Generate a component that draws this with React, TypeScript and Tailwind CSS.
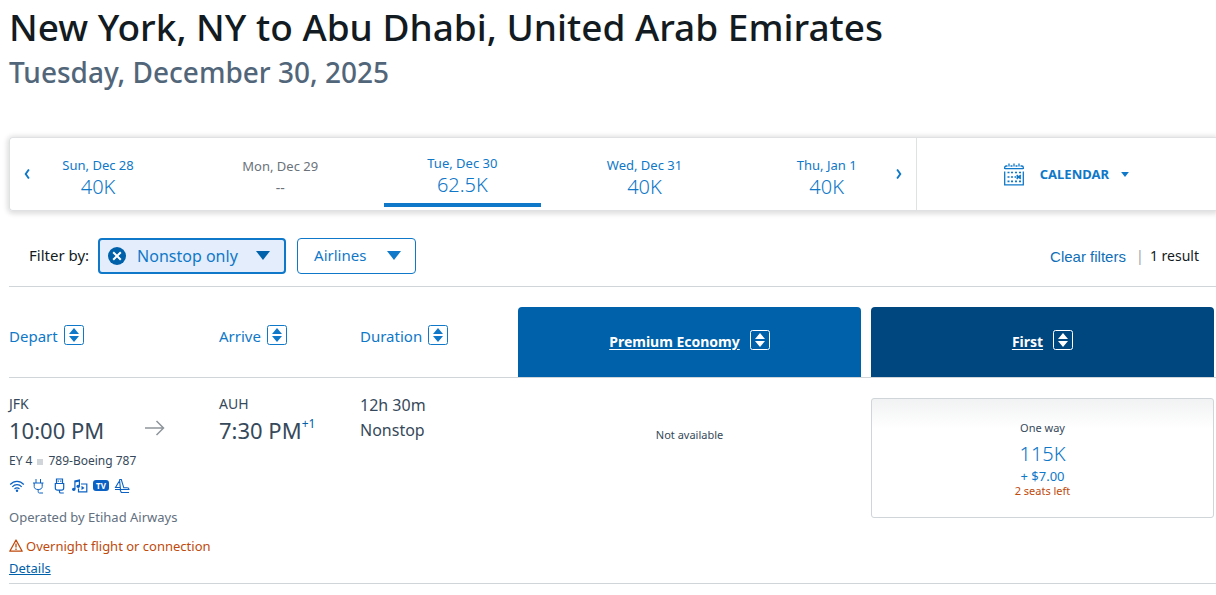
import React, { ReactNode } from "react";

function Caret({ className }: { className: string }) {
  return (
    <svg viewBox="0 0 14 9" className={className} fill="currentColor" aria-hidden="true">
      <path d="M0 0h14L7 9z" />
    </svg>
  );
}

function SortIcon() {
  return (
    <svg viewBox="0 0 20 20" className="size-5 shrink-0" aria-hidden="true">
      <rect x=".5" y=".5" width="19" height="19" rx="2" fill="none" stroke="currentColor" />
      <path d="M10 3l5 6H5zM10 17l5-6H5z" fill="currentColor" />
    </svg>
  );
}

function Chevron({ left }: { left?: boolean }) {
  return (
    <svg viewBox="0 0 6 10" className="h-2.5 w-1.5" fill="none" stroke="currentColor" strokeWidth="1.9" aria-hidden="true">
      <path d={left ? "M4.9 .5L1.700 5l3.200 4.500" : "M1.100 .5L4.300 5 1.100 9.500"} />
    </svg>
  );
}

function CalendarIcon() {
  return (
    <svg viewBox="0 0 20 23" className="h-[23px] w-5" fill="none" stroke="currentColor" aria-hidden="true">
      <path d="M.7 6V4.5Q.7 3 2.2 3H3.5M6.5 3H8.5M11.5 3H13.5M16.5 3H17.8Q19.3 3 19.3 4.5V6M5 .5v3M10 .5v3M15 .5v3" strokeWidth="1.3" />
      <path d="M.7 5.7h18.6M.7 8.5v13.3h18.6V8.5" strokeWidth="1.3" />
      <path d="M3.5 9.5h2M7 9.5h2M11 9.5h2M15 9.5h2M3.5 14h2M7 14h2M10.5 14h1.5M3.5 18.3h2M7 18.3h2M11 18.3h2M15 18.3h2" strokeWidth="1.7" />
      <path d="M12.7 12l4 4M16.7 12l-4 4M12.5 14H17" strokeWidth="1.4" />
    </svg>
  );
}

type Day = { date: string; price: string; state?: "none" | "active" };

const days: Day[] = [
  { date: "Sun, Dec 28", price: "40K" },
  { date: "Mon, Dec 29", price: "--", state: "none" },
  { date: "Tue, Dec 30", price: "62.5K", state: "active" },
  { date: "Wed, Dec 31", price: "40K" },
  { date: "Thu, Jan 1", price: "40K" },
];

function DayTab({ date, price, state }: Day) {
  const base = "flex h-full w-[157px] flex-col items-center justify-center";
  const tone =
    state === "active"
      ? "border-b-4 border-[#0f78c8] pt-2 text-[#0f78c8]"
      : state === "none"
        ? "pt-2.5 text-[#6b737a]"
        : "pt-2 text-[#0f78c8]";
  return (
    <button type="button" disabled={state === "none"} className={base + " " + tone}>
      <span className="text-[13px] leading-5">{date}</span>
      <span className={state === "none" ? "text-sm leading-6" : "text-xl leading-6 font-light"}>{price}</span>
    </button>
  );
}

function SortHeader({ children }: { children: ReactNode }) {
  return (
    <button type="button" className="flex items-center gap-1.5 text-[15px] leading-5 font-normal text-[#0f78c8]">
      <span className="pt-0.5">{children}</span>
      <SortIcon />
    </button>
  );
}

function CabinHeader({ name, className }: { name: string; className: string }) {
  return (
    <div className={"flex h-[70px] items-center justify-center gap-2.5 rounded-t text-white " + className}>
      <a href="#cabin" className="text-sm font-bold underline underline-offset-2">{name}</a>
      <button type="button" aria-label={"Sort by " + name} className="pb-1">
        <SortIcon />
      </button>
    </div>
  );
}

function Amenities() {
  return (
    <div className="flex h-4 items-center gap-[5px] text-[#0b62c4]">
      <svg viewBox="0 0 16 16" className="size-4" fill="none" stroke="currentColor" strokeWidth="1.2" aria-hidden="true">
        <path d="M1.2 6.5C5 2.3 11 2.3 14.8 6.5M3.3 8.8c2.7-3 6.7-3 9.4 0M5.5 11c1.5-1.6 3.5-1.6 5 0" />
        <circle cx="8" cy="12.7" r="1.2" fill="currentColor" stroke="none" />
      </svg>
      <svg viewBox="0 0 16 16" className="size-4" fill="none" stroke="currentColor" aria-hidden="true">
        <path d="M6 1v4M10.5 1v4M3 5h10.5M4.2 5v3.5c0 2 1.5 3 4 3s4-1 4-3V5M8.2 11.5v2.2c0 1 .5 1.3 1.3 1.3H13" />
      </svg>
      <svg viewBox="0 0 16 16" className="size-4" fill="none" stroke="currentColor" strokeWidth="1.2" aria-hidden="true">
        <path d="M5.5 1h6v4.5h-6zM4.3 5.5h8.4V10c0 1.5-1 2.2-2.2 2.2h-4C5.2 12.2 4.3 11.5 4.3 10zM7.3 2.5v1.3M9.7 2.5v1.3M8.5 12.2v1.5c0 1 .5 1.3 1.2 1.3h3.1" />
      </svg>
      <svg viewBox="0 0 16 16" className="size-4" fill="none" stroke="currentColor" strokeWidth="1.2" aria-hidden="true">
        <path d="M2.9 11V3l4.5-1v6M2.9 4l4.5-1M9 6h5.8v7.800H6.500V10.500" />
        <ellipse cx="1.8" cy="11.3" rx="1.2" ry="1" fill="currentColor" />
        <ellipse cx="6.2" cy="8.3" rx="1.2" ry="1" fill="currentColor" />
        <path d="M9.5 7.8v4.2l3-2.1z" fill="currentColor" stroke="none" />
      </svg>
      <span className="flex h-[11px] w-4 items-center justify-center rounded-[3px] bg-[#0b62c4] text-[8px] leading-none font-bold text-white">TV</span>
      <svg viewBox="0 0 16 16" className="size-4" fill="none" stroke="currentColor" strokeWidth="1.1" aria-hidden="true">
        <path d="M5.5 1.5h1.800l2.500 8.300H13c1.200 0 2 .8 2 1.700H6.500L5.500 1.500M5 3.500L1.500 9.500H6M1 11.500h5l1.300 3H15" />
      </svg>
    </div>
  );
}

export default function App() {
  return (
    <main className="min-h-screen overflow-hidden bg-white pl-[9px] font-['Noto_Sans',sans-serif] text-[#36495a]">
      <h1 className="pt-[3px] pb-px text-[37px] leading-12 font-medium text-[#131b22]">
        New York, NY to Abu Dhabi, United Arab Emirates
      </h1>
      <p className="text-[28px] leading-10 font-medium text-[#52667a]">Tuesday, December 30, 2025</p>

      <nav aria-label="Dates" className="mt-[45px] flex h-[74px] rounded-l border border-r-0 border-[#dfe1e3] shadow-[0_1px_5px_2px_rgba(0,0,0,0.13)]">
        <div className="relative flex-[905] text-[#0f78c8]">
          <div className="-mr-0.5 -ml-[3px] grid h-full grid-cols-5 justify-items-center pb-[3px]">
            {days.map((d) => (
              <DayTab key={d.date} {...d} />
            ))}
          </div>
          <button type="button" aria-label="Earlier dates" className="absolute inset-y-0 left-0 px-3.5">
            <Chevron left />
          </button>
          <button type="button" aria-label="Later dates" className="absolute inset-y-0 right-0 px-3.5">
            <Chevron />
          </button>
        </div>
        <button type="button" className="flex flex-[299] items-center justify-center border-l border-[#dfe1e3] text-[13px] font-bold text-[#0f78c8]">
          <CalendarIcon />
          <span className="pt-0.5 pr-3 pl-4">CALENDAR</span>
          <Caret className="h-[5px] w-2" />
        </button>
      </nav>

      <section aria-label="Filters" className="flex h-[76px] items-center border-b border-[#d0d5d9] pt-3.5 pr-[17px] pl-5 text-[15px] text-[#131b22]">
        <span>Filter by:</span>
        <button type="button" className="ml-[9px] flex h-9 w-[188px] items-center rounded border-2 border-[#0f78c8] bg-[#e4edfb] px-2 text-base text-[#0f78c8]">
          <svg viewBox="0 0 18 18" className="size-[18px]" aria-hidden="true">
            <circle cx="9" cy="9" r="9" fill="#0061ab" />
            <path d="M5.2 5.2l7.6 7.6M12.8 5.2l-7.6 7.6" stroke="#fff" strokeWidth="2" />
          </svg>
          <span className="ml-[11px] flex-1 text-left">Nonstop only</span>
          <Caret className="mr-1.5 h-[9px] w-3.5 text-[#0061ab]" />
        </button>
        <button type="button" className="ml-[11px] flex h-9 w-[119px] items-center justify-between rounded border border-[#0f78c8] pr-3.5 pl-4 text-[#0f78c8]">
          Airlines
          <Caret className="h-[9px] w-3.5" />
        </button>
        <div className="ml-auto flex items-center gap-2.5 pt-0.5 text-sm">
          <a href="#clear" className="font-['Liberation_Sans',sans-serif] text-[15px] text-[#0f6fb8]">Clear filters</a>
          <span className="w-1 text-center text-[#9aa1a7]">|</span>
          <span>1 result</span>
        </div>
      </section>

      <table className="w-full table-fixed border-collapse text-left">
        <colgroup>
          <col className="w-[210px]" />
          <col className="w-[141px]" />
          <col className="w-[158px]" />
          <col />
          <col />
        </colgroup>
        <thead>
          <tr className="h-[90px] border-b border-[#d0d5d9]">
            <th className="pt-1.5"><SortHeader>Depart</SortHeader></th>
            <th className="pt-1.5"><SortHeader>Arrive</SortHeader></th>
            <th className="pt-1.5"><SortHeader>Duration</SortHeader></th>
            <th className="pr-1.5 align-bottom"><CabinHeader name="Premium Economy" className="bg-[#0061ab]" /></th>
            <th className="pr-0.5 pl-1 align-bottom"><CabinHeader name="First" className="bg-[#00467f]" /></th>
          </tr>
        </thead>
        <tbody>
          <tr className="h-[206px] border-b border-[#d0d5d9] align-top">
            <td className="pt-4 whitespace-nowrap">
              <div className="text-sm leading-5">JFK</div>
              <div className="flex items-center text-[22px] leading-8">
                <span className="w-[136px]">10:00 PM</span>
                <svg viewBox="0 0 20 16" className="mb-1 h-4 w-5 text-[#8e959b]" fill="none" stroke="currentColor" strokeWidth="1.5" aria-label="to">
                  <path d="M0 8h18.5M11.5 1l7 7-7 7" />
                </svg>
              </div>
              <div className="flex items-center gap-1 pt-[3px] text-xs leading-6">
                EY 4 <span className="mx-px mt-0.5 size-1.5 bg-[#d0d5d9]" /> 789-Boeing 787
              </div>
              <div className="pt-[5px]"><Amenities /></div>
              <div className="pt-[13px] text-[13px] leading-5 text-[#627080]">Operated by Etihad Airways</div>
              <div className="flex items-center gap-[3px] pt-[7px] text-[13px] leading-6 text-[#c04a0c]">
                <svg viewBox="0 0 14 13" className="h-[13px] w-3.5" fill="none" stroke="currentColor" strokeWidth="1.3" aria-hidden="true">
                  <path d="M7 1l6.2 11.2H.8zM7 4.5v4M7 9.5v1.5" strokeLinejoin="round" />
                </svg>
                Overnight flight or connection
              </div>
              <a href="#details" className="block text-[13px] leading-5 text-[#0061ab] underline">Details</a>
            </td>
            <td className="pt-4 whitespace-nowrap">
              <div className="text-sm leading-5">AUH</div>
              <div className="flex text-[22px] leading-8">
                7:30 PM<span className="text-xs leading-5 text-[#0061ab]">+1</span>
              </div>
            </td>
            <td className="pt-[15px] text-base leading-[25px]">
              <div>12h 30m</div>
              <div>Nonstop</div>
            </td>
            <td className="pt-[47px] pr-1.5 text-center text-[11px] leading-5">Not available</td>
            <td className="pt-5 pr-0.5 pl-1">
              <button type="button" className="flex h-[120px] w-full flex-col items-center justify-center rounded-[3px] border border-[#d0d5d9] bg-linear-to-b from-[#f1f2f3] to-white to-25% pb-0.5 text-[#0f78c8]">
                <span className="text-[11px] leading-6 text-[#36495a]">One way</span>
                <span className="text-xl leading-7 font-light">115K</span>
                <span className="text-[13px] leading-4">+ $7.00</span>
                <span className="text-[11px] leading-[14px] text-[#c04a0c]">2 seats left</span>
              </button>
            </td>
          </tr>
        </tbody>
      </table>
    </main>
  );
}
